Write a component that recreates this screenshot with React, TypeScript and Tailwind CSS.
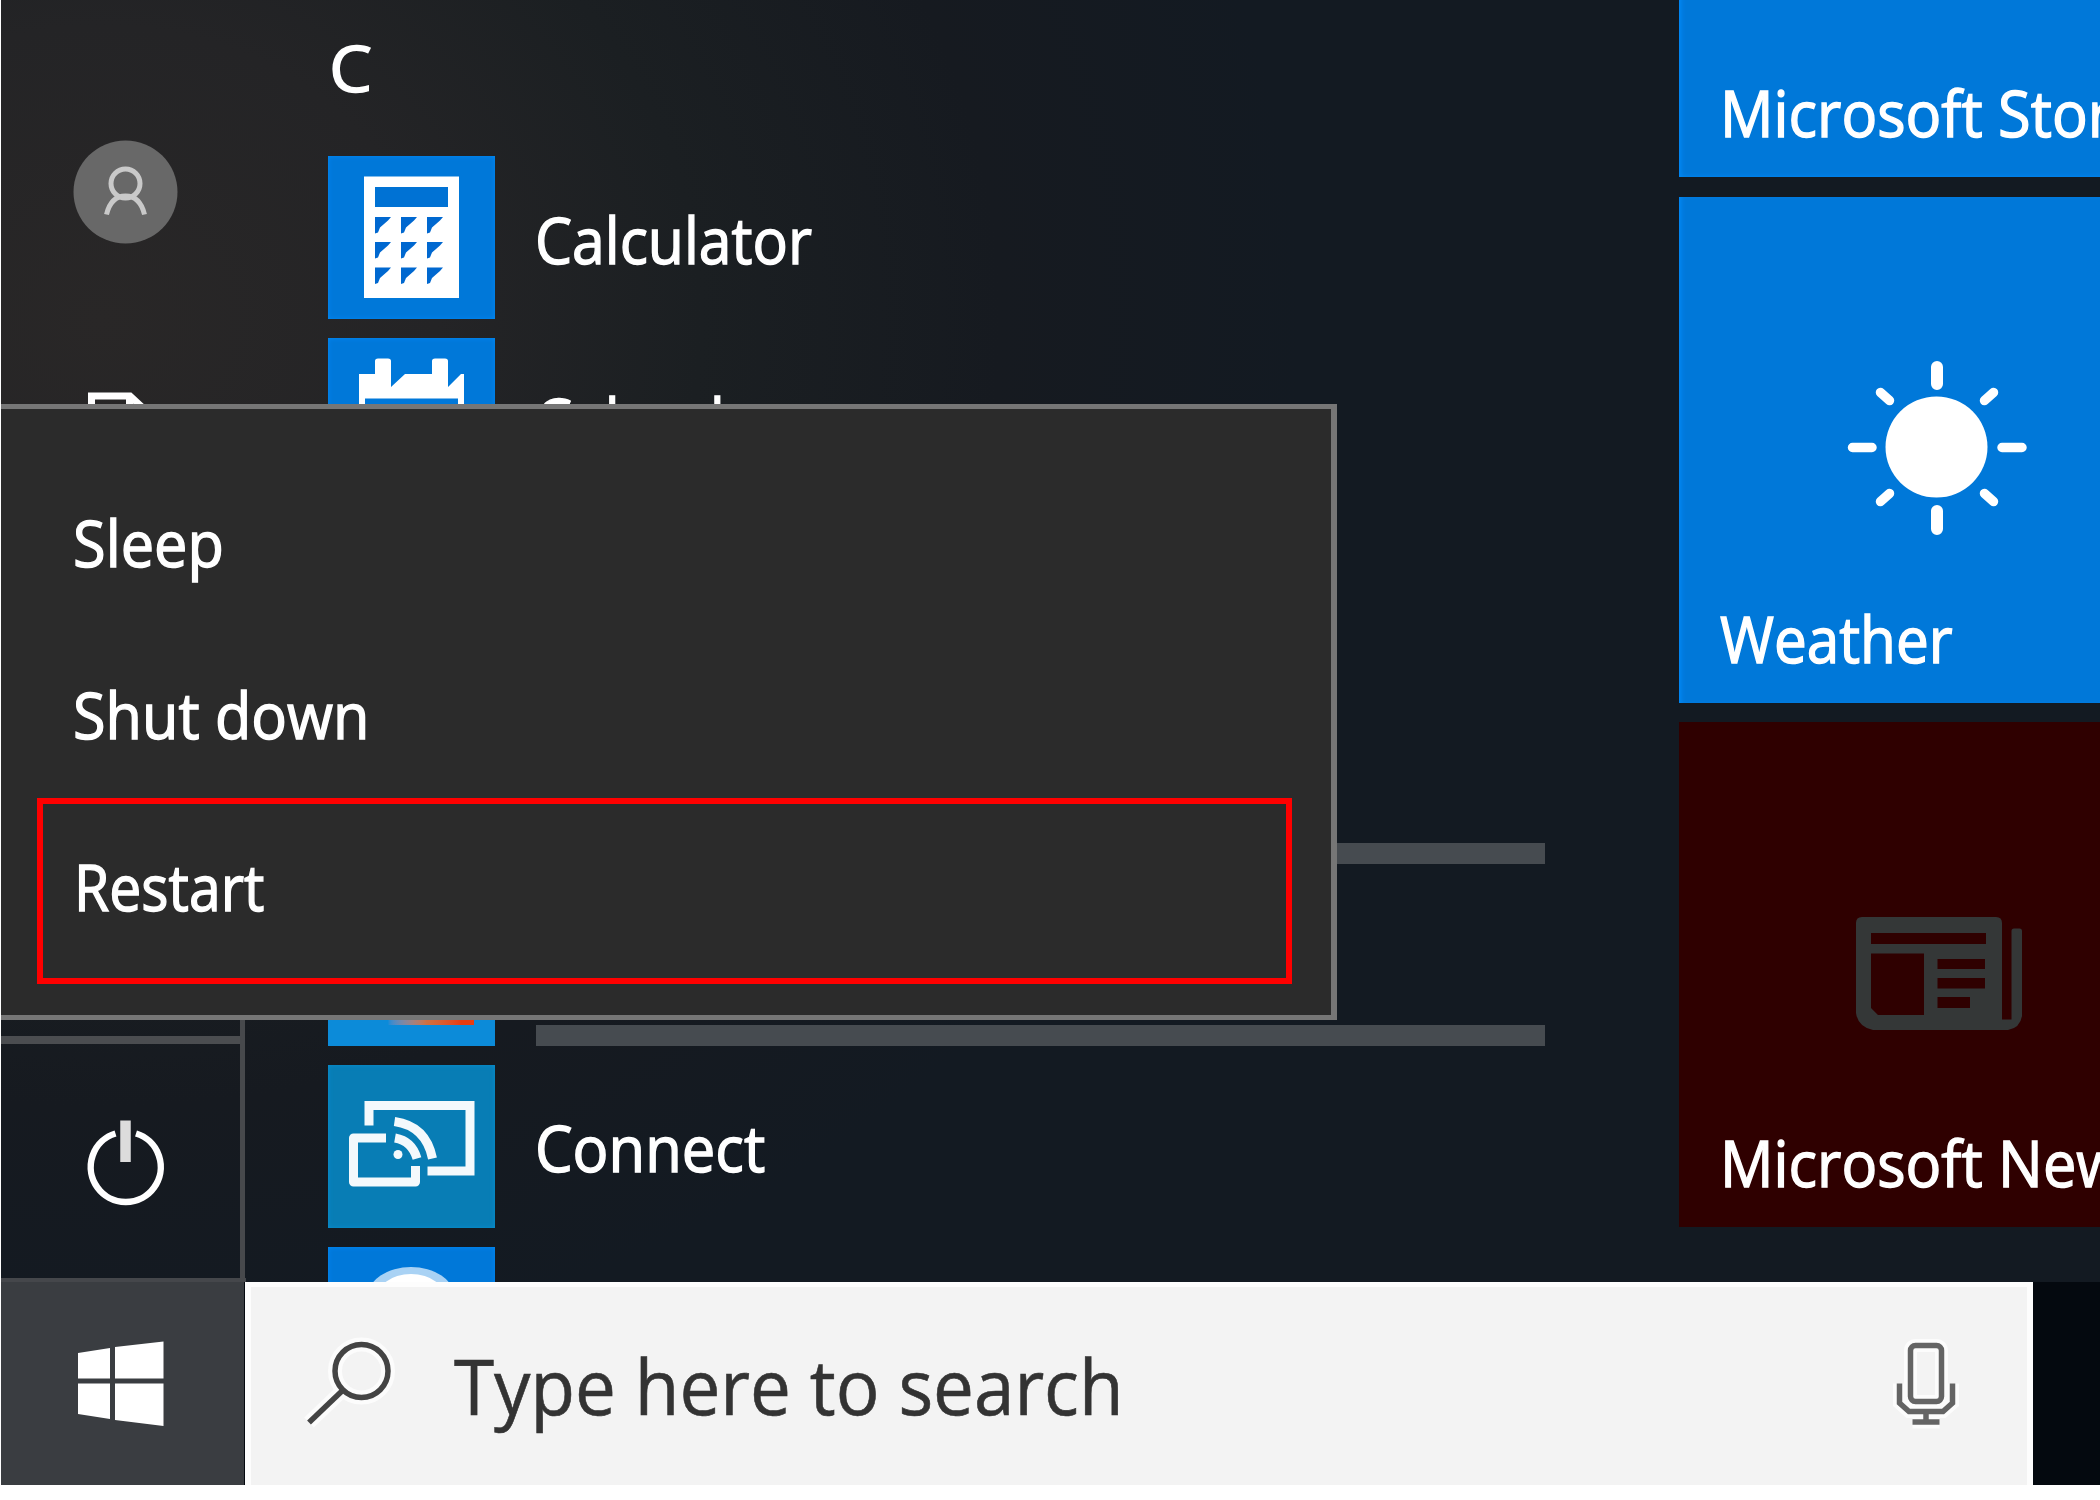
import type { ReactNode } from "react";

const blueTile = "bg-[#0078d9] shadow-[inset_0_0_5px_#008af8]";
const heavy = "[-webkit-text-stroke:1.4px_currentColor]";

function AppRow({ tile, children, label, scale = "scale-x-[0.92]" }: { tile: string; children?: ReactNode; label?: string; scale?: string }) {
  return (
    <div className="flex h-[163px] shrink-0 items-center gap-[40px]">
      <div className={`h-[163px] w-[167px] shrink-0 ${tile}`}>{children}</div>
      {label && <span className={`origin-left pt-[4px] leading-[80px] whitespace-nowrap text-white ${heavy} ${scale}`}>{label}</span>}
    </div>
  );
}

function Tile({ label, className, children, scale = "scale-x-[0.93]" }: { label: string; className: string; children?: ReactNode; scale?: string }) {
  return (
    <div className={`relative flex w-[421px] shrink-0 flex-col justify-end overflow-hidden pb-[24px] pl-[41px] ${className}`}>
      {children}
      <span className={`origin-left leading-[80px] whitespace-nowrap text-white ${heavy} ${scale}`}>{label}</span>
    </div>
  );
}

function CalculatorIcon() {
  return (
    <svg viewBox="328 156 167 163" className="h-full w-full">
      <rect x="364" y="176.500" width="95" height="121.500" fill="#fff" />
      <rect x="375" y="187" width="73" height="20" fill="#0072d4" />
      {[217, 242, 267.5].map((y) =>
        [375, 401, 427].map((x) => <path key={`${x}-${y}`} d={`M${x} ${y}h16l-3 3.500l-8 7l-2 5l-3 1z`} fill="#0068d0" />),
      )}
    </svg>
  );
}

function CalendarIcon() {
  return (
    <svg viewBox="328 338 167 163" className="h-full w-full">
      <path d="M359 374H375V361Q375 358.500 378 358.500H388Q391 358.500 391 361V387L405 374H432V361Q432 358.500 435 358.500H445Q448 358.500 448 361V387L461 374H464V470H359Z" fill="#fff" />
      <rect x="365" y="398.500" width="93" height="60" fill="#0078d9" />
    </svg>
  );
}

function ConnectIcon() {
  return (
    <svg viewBox="328 1065 167 163" className="h-full w-full" fill="none" stroke="#f4f9fc" strokeWidth="9">
      <path d="M369 1125.500V1105.500H470V1171H427.500" />
      <path d="M386 1138H353.500V1182H415.500V1166" strokeLinejoin="round" />
      <path d="M395 1138Q412 1141 417 1158.500" />
      <path d="M394.500 1121.500Q426 1126 432.500 1158.500" />
      <circle cx="398" cy="1154.500" r="4.500" fill="#f4f9fc" stroke="none" />
    </svg>
  );
}

function SunIcon() {
  return (
    <svg viewBox="1846 360 182 176" className="absolute top-[163.500px] left-[167px] h-[176px] w-[182px]" stroke="#fff" fill="#fff" strokeLinecap="round">
      <ellipse cx="1936.500" cy="447" rx="51" ry="50.500" stroke="none" />
      <g strokeWidth="12">
        <path d="M1937 367V384M1937 511V529" />
      </g>
      <g strokeWidth="9.500">
        <path d="M1852.500 447.500H1872M2002 447.500H2022" />
        <path d="M1880.500 392.500L1889.500 400.500M1993.500 392.500L1984.500 400.500M1880.500 501.500L1889.500 493.500M1993.500 501.500L1984.500 493.500" />
      </g>
    </svg>
  );
}

function NewsIcon() {
  return (
    <svg viewBox="1855 916 168 115" className="absolute top-[194px] left-[176px] h-[115px] w-[168px]">
      <path
        fillRule="evenodd"
        fill="#343737"
        d="M1862 917H1996Q2002 917 2002 923V1019.500H2011.500V931Q2011.500 928.500 2014 928.500H2019.500Q2022 928.500 2022 931V1016Q2020 1028 2008 1030H1873Q1858 1027 1856 1013V923Q1856 917 1862 917ZM1871 933V944H1986V933ZM1871 953.500V1008L1878 1015H1924V953.500ZM1937.500 959V969H1985V959ZM1937.500 978V988.500H1985V978ZM1937.500 997V1008H1970V997Z"
      />
    </svg>
  );
}

function SearchIcon() {
  const shape = (
    <>
      <circle cx="362.500" cy="1371" r="26.500" />
      <path d="M343 1391L310 1422.500" />
    </>
  );
  return (
    <svg viewBox="300 1334 100 100" className="h-[100px] w-[100px] shrink-0" fill="none">
      <g stroke="#fcfcfc" strokeWidth="14">{shape}</g>
      <g stroke="#444" strokeWidth="5.500">{shape}</g>
    </svg>
  );
}

function MicIcon() {
  const shape = (
    <>
      <rect x="1910.500" y="1345.500" width="31" height="56" rx="5" />
      <path d="M1899.500 1383.500V1403L1909 1411.500H1943L1952.500 1403V1383.500" />
      <path d="M1926 1411V1422M1912.500 1422H1939.500" />
    </>
  );
  return (
    <svg viewBox="1886 1334 80 100" className="h-[100px] w-[80px] shrink-0" fill="none">
      <g stroke="#fcfcfc" strokeWidth="13">{shape}</g>
      <g stroke="#646464" strokeWidth="5.500">{shape}</g>
    </svg>
  );
}

function Rail() {
  return (
    <div className="flex w-[245px] shrink-0 flex-col border-b-[4px] border-[#45474b]">
      <div className="h-[1036px] shrink-0 overflow-hidden pt-[140px] pl-[72px]">
        <svg viewBox="73 140 105 104" className="h-[104px] w-[105px]" fill="none">
          <ellipse cx="125.500" cy="192" rx="52" ry="51.500" fill="#686868" />
          <g stroke="#c9c9c9" strokeWidth="5">
            <circle cx="125.500" cy="183.500" r="14.500" />
            <path d="M106.500 214.500Q111 196 125.500 196Q140 196 144.500 214.500" />
          </g>
        </svg>
        <svg viewBox="88 392 60 80" className="mt-[148px] ml-[15px] h-[80px] w-[60px]" fill="none" stroke="#fff" strokeWidth="7">
          <path d="M91.500 470V396H130L144 409V470M129.500 396V412H144" />
        </svg>
      </div>
      <div className="h-[8px] w-[239px] shrink-0 bg-[#4b4d50]" />
      <div className="flex grow pt-[73px] pl-[84px]">
        <svg viewBox="85 1117 82 90" className="h-[90px] w-[82px]" fill="none">
          <path d="M115.500 1133.500A35 35 0 1 0 136 1133.500" stroke="#fff" strokeWidth="6.500" />
          <path d="M125.500 1120.500V1162" stroke="#dcdcdc" strokeWidth="10.500" />
        </svg>
      </div>
    </div>
  );
}

function Menu() {
  return (
    <div className={`absolute top-[404px] left-px flex h-[616px] w-[1336px] flex-col border-y-[5px] border-r-[6px] border-[#767676] bg-[#2b2b2b] pt-[47px] text-white`}>
      <div className="flex h-[171px] items-center pt-[3px] pl-[72px]">
        <span className={`origin-left scale-x-[0.93] ${heavy}`}>Sleep</span>
      </div>
      <div className="flex h-[171px] items-center pt-[4px] pl-[72px]">
        <span className={`origin-left scale-x-[0.928] whitespace-nowrap ${heavy}`}>Shut down</span>
      </div>
      <div className="ml-[36px] flex h-[186px] w-[1255px] items-center border-[6px] border-[#ff0000] pb-[8px] pl-[31px]">
        <span className={`origin-left scale-x-[0.893] ${heavy}`}>Restart</span>
      </div>
    </div>
  );
}

export default function App() {
  return (
    <div className="relative flex h-[1500px] w-[2100px] flex-col overflow-hidden bg-white pl-px font-['Open_Sans','Noto_Sans',sans-serif] text-[64px] leading-[80px]">
      <div className="flex h-[1282px] shrink-0 overflow-hidden bg-[#131a22] bg-[radial-gradient(ellipse_1200px_1050px_at_100px_320px,#292727_0%,#242426_28%,#1b1f22_50%,#161a20_75%,#131a22_100%)]">
        <Rail />
        <div className="flex w-[1433px] shrink-0 flex-col pl-[83px]">
          <div className="flex h-[156px] shrink-0 items-start pt-[28px] text-white">
            <span className={`origin-left scale-x-[1.07] ${heavy}`}>C</span>
          </div>
          <div className="-ml-px flex flex-col gap-[18.800px]">
            <AppRow tile={blueTile} label="Calculator"><CalculatorIcon /></AppRow>
            <AppRow tile={blueTile} label="Calendar"><CalendarIcon /></AppRow>
            <AppRow tile={blueTile} />
            <div className="flex h-[163px] shrink-0 items-end gap-[41px]">
              <div className={`h-[163px] w-[167px] shrink-0 ${blueTile}`} />
              <div className="h-[21px] w-[1009px] shrink-0 bg-[#464b50]" />
            </div>
            <div className="flex h-[163px] shrink-0 items-end gap-[41px]">
              <div className="flex h-[163px] w-[167px] shrink-0 flex-col justify-end bg-[#0c8bd9] pb-[21px]">
                <div className="ml-[60px] h-[6px] w-[86px] bg-linear-to-r from-[#0c8bd9] via-[#d07040] via-45% to-[#e83c10] to-85%" />
              </div>
              <div className="h-[21px] w-[1009px] shrink-0 bg-[#464b50]" />
            </div>
            <AppRow tile="bg-[#087db5] shadow-[inset_0_0_5px_#0890d0]" label="Connect" scale="scale-x-[0.933]"><ConnectIcon /></AppRow>
            <AppRow tile={blueTile}>
              <svg viewBox="328 1247 167 163" className="h-full w-full">
                <ellipse cx="411" cy="1296" rx="43" ry="29" fill="#a9d2f4" />
                <ellipse cx="411" cy="1301" rx="36" ry="27" fill="#fff" />
              </svg>
            </AppRow>
          </div>
        </div>
        <div className="flex flex-col">
          <Tile label="Microsoft Store" className="h-[177px] bg-[#0078d9] shadow-[inset_5px_-3px_5px_-3px_#008af8]" />
          <Tile label="Weather" className="mt-[19.500px] h-[506px] bg-[#0078d9] shadow-[inset_4px_0_5px_-2px_#008af8]" scale="scale-x-[0.913]"><SunIcon /></Tile>
          <Tile label="Microsoft News" className="mt-[19.500px] h-[505px] bg-[#2f0000]"><NewsIcon /></Tile>
        </div>
      </div>
      <div className="flex h-[203px] shrink-0 bg-[#04090f]">
        <div className="w-[243px] shrink-0 bg-[#3a3d41] pt-[56px] pl-[76px]">
          <svg viewBox="77 1338 90 92" className="h-[92px] w-[90px]" fill="#fff">
            <path d="M78 1353L110 1348V1378.500H78ZM115 1347L163.500 1341.500V1378.500H115ZM78 1383.500H110V1419L78 1414ZM115 1383.500H163.500V1426L115 1420Z" />
          </svg>
        </div>
        <div className="ml-px flex w-[1788px] shrink-0 border-x-[6px] border-t-[5px] border-[#fdfdfd] bg-[#f3f3f3] pt-[47px] pl-[48px] text-[#333]">
          <SearchIcon />
          <span className="ml-[55px] origin-left scale-x-[0.945] pt-[2px] text-[77px] leading-[100px] whitespace-nowrap [-webkit-text-stroke:0.6px_currentColor]">Type here to search</span>
          <div className="mr-[61px] ml-auto"><MicIcon /></div>
        </div>
      </div>
      <Menu />
      <div className="pointer-events-none absolute top-[1020px] left-[240px] h-[262px] w-[5px] bg-[#47494c]" />
      <div className="absolute top-[843px] left-[1337px] h-[21px] w-[208px] bg-[#464b50]" />
    </div>
  );
}
